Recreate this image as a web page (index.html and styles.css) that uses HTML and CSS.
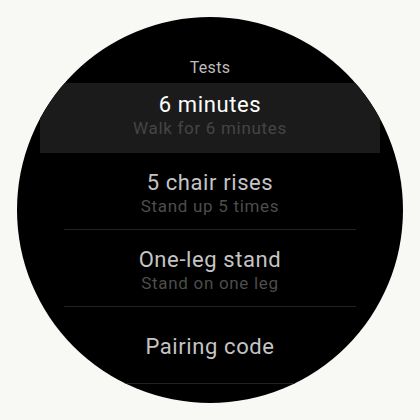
FILE: index.html
```html
<!DOCTYPE html>
<html lang="en">
<head>
    <meta charset="UTF-8">
    <meta name="viewport" content="width=device-width, initial-scale=1.0">
    <title>Tests</title>
    <link rel="stylesheet" href="styles.css">
</head>
<body>
    <div class="watch">
        <div class="header">Tests</div>
        <div class="list">
            <div class="item selected">
                <div class="title">6 minutes</div>
                <div class="subtitle">Walk for 6 minutes</div>
            </div>
            <div class="item">
                <div class="title">5 chair rises</div>
                <div class="subtitle">Stand up 5 times</div>
            </div>
            <div class="item">
                <div class="title">One-leg stand</div>
                <div class="subtitle">Stand on one leg</div>
            </div>
            <div class="item single">
                <div class="title">Pairing code</div>
            </div>
        </div>
    </div>
</body>
</html>
```

FILE: styles.css
```css
body {
    margin: 0;
    padding-top: 17px;
    background-color: #f8f8f5;
    font-family: Roboto, "Open Sans", sans-serif;
}
.watch {
    width: 386px;
    height: 386px;
    margin: 0 auto;
    border-radius: 50%;
    background-color: #000;
    overflow: hidden;
    text-align: center;
}
.header {
    padding-top: 41px;
    height: 25px;
    font-size: 16px;
    line-height: 20px;
    letter-spacing: 0.3px;
    color: #bdbdbd;
}
.item {
    height: 59px;
    padding-top: 17px;
    margin: 0 47px;
    border-bottom: 1px solid #222;
}
.item.selected {
    height: 61px;
    padding-top: 9px;
    margin: 0 23px;
    border-bottom: none;
    background-color: #1b1b1b;
}
.item.single {
    height: 49px;
    padding-top: 27px;
}
.title {
    font-size: 22px;
    line-height: 26px;
    letter-spacing: 0.6px;
    color: #c4c4c4;
}
.selected .title {
    color: #fff;
}
.subtitle {
    font-size: 17px;
    line-height: 20px;
    letter-spacing: 0.7px;
    color: #4d4d4d;
}
.selected .subtitle {
    color: #454545;
}
```
